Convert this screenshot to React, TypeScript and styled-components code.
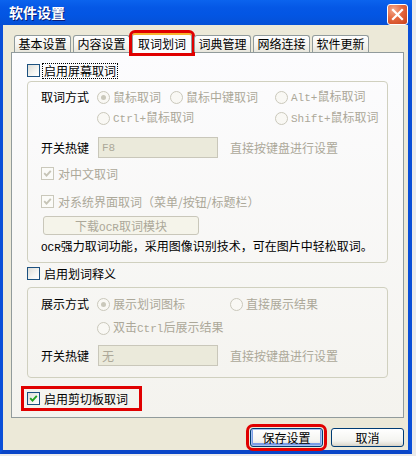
import React from "react";
import styled, { createGlobalStyle, css } from "styled-components";

const GlobalStyle = createGlobalStyle`
  html, body {
    margin: 0;
    padding: 0;
    background: #ebebeb;
  }
  body {
    font-family: "Noto Sans CJK SC", "Liberation Sans", sans-serif;
    font-size: 12px;
    color: #000;
  }
  * {
    box-sizing: border-box;
  }
`;

const Window = styled.div`
  width: 412px;
  display: flex;
  flex-direction: column;
`;

const TitleBar = styled.div`
  height: 25px;
  display: flex;
  align-items: flex-start;
  justify-content: space-between;
  padding: 4px 4px 0 9px;
  background: linear-gradient(#0b63ee, #0558e6 30%, #0355e3 60%, #0550d6);
`;

const Title = styled.div`
  color: #fff;
  font-size: 14px;
  font-weight: 700;
  line-height: 17px;
  text-shadow: 1px 1px 0 #0a1e7a;
`;

const CloseButton = styled.div`
  width: 21px;
  height: 21px;
  border: 1px solid #fff;
  border-radius: 3px;
  background: radial-gradient(circle at 30% 25%, #f3a88d 0%, #e4683f 45%, #c9401a 100%);
  display: flex;
  align-items: center;
  justify-content: center;
`;

const Frame = styled.div`
  border-left: 3px solid #0a4fd8;
  border-right: 4px solid #0a4fd8;
  border-bottom: 4px solid #0a46c8;
  background: #ece9d8;
  padding: 8px 4px 3px 8px;
  display: flex;
  flex-direction: column;
`;

const TabRow = styled.div`
  display: flex;
  align-items: flex-end;
  gap: 2px;
  height: 20px;
  padding-left: 3px;
  margin-bottom: -1px;
  position: relative;
  z-index: 1;
`;

const Tab = styled.div<{ $active?: boolean }>`
  width: 57px;
  height: 17px;
  margin-bottom: 1px;
  border: 1px solid #919b9c;
  border-bottom: none;
  border-radius: 3px 3px 0 0;
  background: linear-gradient(#fefefe, #f4f3ee 60%, #e8e6dc);
  display: flex;
  align-items: center;
  justify-content: center;
  line-height: 16px;
  ${(p) =>
    p.$active &&
    css`
      width: 60px;
      height: 20px;
      margin-bottom: 0;
      background: #fcfcfe;
      border-top: 2px solid #f7b32d;
      outline: 3px solid #e00000;
      outline-offset: 0;
    `}
`;

const Panel = styled.div`
  border: 1px solid #919b9c;
  background: linear-gradient(#fcfcfe, #f4f3ee);
  padding: 9px 15px 10px 15px;
  display: flex;
  flex-direction: column;
  align-items: flex-start;
`;

const CheckRow = styled.div<{ $mt?: number }>`
  display: flex;
  align-items: center;
  gap: 2px;
  height: 17px;
  margin-top: ${(p) => p.$mt ?? 0}px;
`;

const Box = styled.span<{ $disabled?: boolean }>`
  width: 13px;
  height: 13px;
  flex: none;
  border: 1px solid ${(p) => (p.$disabled ? "#cac8bb" : "#1c5180")};
  background: ${(p) =>
    p.$disabled ? "#fbfbf8" : "linear-gradient(135deg, #dcdcd7, #f5f5f2 60%, #ffffff)"};
  display: flex;
  align-items: center;
  justify-content: center;
`;

const Label = styled.span<{ $focus?: boolean; $disabled?: boolean }>`
  line-height: 14px;
  padding: 0 1px;
  border: 1px solid transparent;
  color: ${(p) => (p.$disabled ? "#aca899" : "#000")};
  ${(p) =>
    p.$focus &&
    css`
      border: 1px dotted #000;
    `}
`;

// red annotation frame; negative margins keep the wrapped row in place
const Marked = styled.div`
  display: flex;
  border: 3px solid #e00000;
  padding: 1px 9px 1px 3px;
  margin: 8px 0 -4px -6px;
`;

const Group = styled.div<{ $mt: number; $pt: number; $pb: number }>`
  align-self: stretch;
  margin-top: ${(p) => p.$mt}px;
  padding: ${(p) => p.$pt}px 12px ${(p) => p.$pb}px 13px;
  border: 1px solid #d0d0bf;
  border-radius: 4px;
  display: flex;
  flex-direction: column;
  align-items: flex-start;
`;

const OptionGrid = styled.div<{ $cols: string; $gap: number }>`
  display: grid;
  grid-template-columns: ${(p) => p.$cols};
  grid-auto-rows: 20px;
  row-gap: ${(p) => p.$gap}px;
  align-items: center;
`;

const RowLabel = styled.span`
  grid-column: 1;
  grid-row: 1;
  line-height: 16px;
`;

const RadioItem = styled.span<{ $col: number; $row: number }>`
  grid-column: ${(p) => p.$col};
  grid-row: ${(p) => p.$row};
  display: flex;
  align-items: center;
  gap: 3px;
  color: #aca899;
  line-height: 16px;
  white-space: nowrap;
`;

const Circle = styled.span<{ $on?: boolean }>`
  width: 13px;
  height: 13px;
  flex: none;
  border-radius: 50%;
  border: 1px solid #cac8bb;
  background: #f9f8f4;
  display: flex;
  align-items: center;
  justify-content: center;
  &::after {
    content: "";
    width: 5px;
    height: 5px;
    border-radius: 50%;
    background: ${(p) => (p.$on ? "#cac8bb" : "transparent")};
  }
`;

const HotkeyRow = styled.div<{ $mt: number }>`
  display: flex;
  align-items: center;
  margin-top: ${(p) => p.$mt}px;
`;

const HotkeyLabel = styled.span`
  width: 57px;
  line-height: 16px;
`;

const KeyInput = styled.div`
  width: 120px;
  height: 21px;
  border: 1px solid #c9c7ba;
  background: #ebeadb;
  color: #aca899;
  padding: 0 3px;
  display: flex;
  align-items: center;
`;

const Hint = styled.span`
  margin-left: 12px;
  color: #aca899;
  line-height: 16px;
`;

const GhostButton = styled.div<{ $mt: number }>`
  width: 156px;
  height: 19px;
  margin: ${(p) => p.$mt}px 0 0 2px;
  border: 1px solid #c9c7ba;
  border-radius: 3px;
  background: #f5f4ea;
  color: #aca899;
  text-align: center;
  line-height: 17px;
`;

const Note = styled.div`
  margin-top: 3px;
  line-height: 16px;
  white-space: nowrap;
`;

const ButtonRow = styled.div`
  display: flex;
  justify-content: flex-end;
  gap: 8px;
  margin-top: 10px;
`;

const Button = styled.div<{ $default?: boolean; $marked?: boolean }>`
  width: 73px;
  height: 19px;
  border: 1px solid #003c74;
  border-radius: 3px;
  background: linear-gradient(#ffffff, #f4f4f0 70%, #e3e0d7 90%, #d6d0c5);
  display: flex;
  align-items: center;
  justify-content: center;
  line-height: 16px;
  ${(p) =>
    p.$default &&
    css`
      box-shadow: inset 0 0 0 1px #a8c3f0, inset 0 -1px 0 2px #7c9de6;
    `}
  ${(p) =>
    p.$marked &&
    css`
      outline: 3px solid #e00000;
      outline-offset: 1px;
    `}
`;

const Latin = styled.span`
  font-family: "Liberation Mono", "DejaVu Sans Mono", monospace;
  font-size: 11px;
`;

function Mixed({ text }: { text: string }) {
  const parts = text.split(/([A-Za-z0-9+]+)/);
  return (
    <span>
      {parts.map((p, i) => (/^[A-Za-z0-9+]+$/.test(p) ? <Latin key={i}>{p}</Latin> : p))}
    </span>
  );
}

function Check({ checked, disabled }: { checked?: boolean; disabled?: boolean }) {
  return (
    <Box $disabled={disabled}>
      {checked && (
        <svg width="9" height="9" viewBox="0 0 9 9">
          <polyline
            points="1.2,4.2 3.5,6.6 7.8,1.8"
            fill="none"
            stroke={disabled ? "#c6c4b6" : "#21a121"}
            strokeWidth="1.9"
          />
        </svg>
      )}
    </Box>
  );
}

const tabs = ["基本设置", "内容设置", "取词划词", "词典管理", "网络连接", "软件更新"];

type Opt = { text: string; col: number; row: number; on?: boolean };

const captureOpts: Opt[] = [
  { text: "鼠标取词", col: 2, row: 1, on: true },
  { text: "鼠标中键取词", col: 3, row: 1 },
  { text: "Alt+鼠标取词", col: 4, row: 1 },
  { text: "Ctrl+鼠标取词", col: 2, row: 2 },
  { text: "Shift+鼠标取词", col: 4, row: 2 },
];

const showOpts: Opt[] = [
  { text: "展示划词图标", col: 2, row: 1, on: true },
  { text: "直接展示结果", col: 3, row: 1 },
  { text: "双击Ctrl后展示结果", col: 2, row: 2 },
];

function Options({ label, opts, cols, gap }: { label: string; opts: Opt[]; cols: string; gap: number }) {
  return (
    <OptionGrid $cols={cols} $gap={gap}>
      <RowLabel>{label}</RowLabel>
      {opts.map((o) => (
        <RadioItem key={o.text} $col={o.col} $row={o.row}>
          <Circle $on={o.on} />
          <Mixed text={o.text} />
        </RadioItem>
      ))}
    </OptionGrid>
  );
}

function Hotkey({ value, mt }: { value: React.ReactNode; mt: number }) {
  return (
    <HotkeyRow $mt={mt}>
      <HotkeyLabel>开关热键</HotkeyLabel>
      <KeyInput>{value}</KeyInput>
      <Hint>直接按键盘进行设置</Hint>
    </HotkeyRow>
  );
}

export default function App() {
  return (
    <>
      <GlobalStyle />
      <Window>
        <TitleBar>
          <Title>软件设置</Title>
          <CloseButton>
            <svg width="13" height="13" viewBox="0 0 13 13">
              <path d="M2 2 L11 11 M11 2 L2 11" stroke="#fff" strokeWidth="2.2" strokeLinecap="square" />
            </svg>
          </CloseButton>
        </TitleBar>
        <Frame>
          <TabRow>
            {tabs.map((t) => (
              <Tab key={t} $active={t === "取词划词"}>
                {t}
              </Tab>
            ))}
          </TabRow>
          <Panel>
            <CheckRow>
              <Check />
              <Label $focus>启用屏幕取词</Label>
            </CheckRow>
            <Group $mt={2} $pt={5} $pb={6}>
              <Options label="取词方式" opts={captureOpts} cols="56px 73px 105px auto" gap={1} />
              <Hotkey value={<Latin>F8</Latin>} mt={9} />
              <CheckRow $mt={7}>
                <Check checked disabled />
                <Label $disabled>对中文取词</Label>
              </CheckRow>
              <CheckRow $mt={11}>
                <Check checked disabled />
                <Label $disabled>对系统界面取词（菜单/按钮/标题栏）</Label>
              </CheckRow>
              <GhostButton $mt={6}>
                <Mixed text="下载OCR取词模块" />
              </GhostButton>
              <Note>
                <Mixed text="OCR强力取词功能，采用图像识别技术，可在图片中轻松取词。" />
              </Note>
            </Group>
            <CheckRow $mt={2}>
              <Check />
              <Label>启用划词释义</Label>
            </CheckRow>
            <Group $mt={5} $pt={6} $pb={11}>
              <Options label="展示方式" opts={showOpts} cols="56px 133px auto" gap={4} />
              <Hotkey value="无" mt={7} />
            </Group>
            <Marked>
              <CheckRow>
                <Check checked />
                <Label>启用剪切板取词</Label>
              </CheckRow>
            </Marked>
          </Panel>
          <ButtonRow>
            <Button $default $marked>
              保存设置
            </Button>
            <Button>取消</Button>
          </ButtonRow>
        </Frame>
      </Window>
    </>
  );
}
